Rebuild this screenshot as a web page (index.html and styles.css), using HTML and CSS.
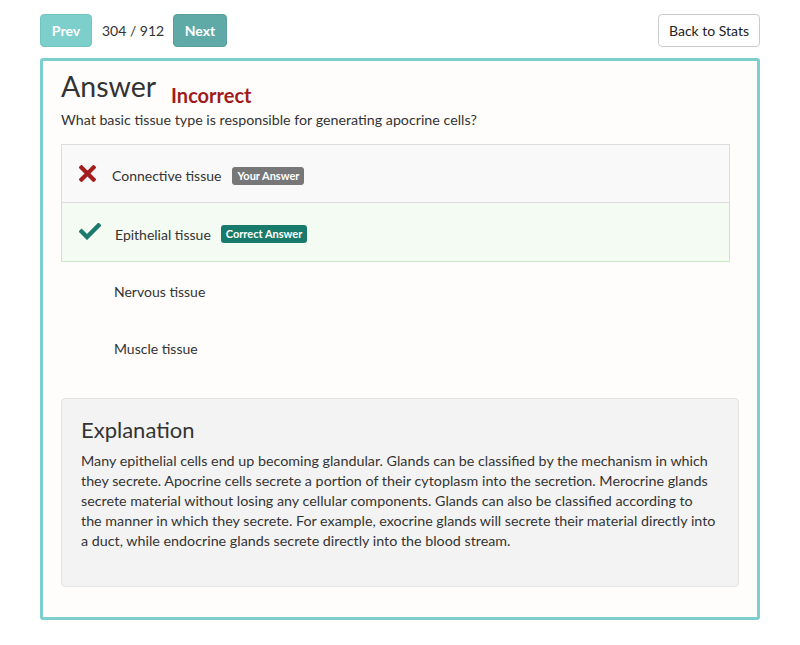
FILE: index.html
```html
<!DOCTYPE html>
<html>
<head>
<meta charset="utf-8">
<link rel="stylesheet" href="styles.css">
</head>
<body>
<div class="page">
  <div class="toolbar">
    <div class="nav">
      <button class="btn btn-prev">Prev</button>
      <span class="counter">304 / 912</span>
      <button class="btn btn-next">Next</button>
    </div>
    <button class="btn btn-back">Back to Stats</button>
  </div>
  <div class="card">
    <div class="title-row">
      <h1 class="title">Answer</h1>
      <span class="status">Incorrect</span>
    </div>
    <p class="question">What basic tissue type is responsible for generating apocrine cells?</p>
    <ul class="options">
      <li class="option option-wrong">
        <span class="icon"><svg width="17" height="17" viewBox="0 0 17 17"><path d="M2.5 2.5 L14.5 14.5 M14.5 2.5 L2.5 14.5" stroke="#a41e1e" stroke-width="4.2" stroke-linecap="square"/></svg></span>
        <span class="label">Connective tissue</span>
        <span class="badge badge-your">Your Answer</span>
      </li>
      <li class="option option-correct">
        <span class="icon"><svg width="22" height="17" viewBox="0 0 22 17"><path d="M2.5 8.5 L8 14 L19.5 2.5" fill="none" stroke="#1b7a6b" stroke-width="4.4" stroke-linecap="square"/></svg></span>
        <span class="label label-shift">Epithelial tissue</span>
        <span class="badge badge-correct">Correct Answer</span>
      </li>
      <li class="option">
        <span class="icon"></span>
        <span class="label label-mid">Nervous tissue</span>
      </li>
      <li class="option">
        <span class="icon"></span>
        <span class="label label-mid">Muscle tissue</span>
      </li>
    </ul>
    <div class="explanation">
      <h2 class="exp-title">Explanation</h2>
      <p class="exp-text">Many epithelial cells end up becoming glandular. Glands can be classified by the mechanism in which they secrete. Apocrine cells secrete a portion of their cytoplasm into the secretion. Merocrine glands secrete material without losing any cellular components. Glands can also be classified according to<br>the manner in which they secrete. For example, exocrine glands will secrete their material directly into a duct, while endocrine glands secrete directly into the blood stream.</p>
    </div>
  </div>
</div>
</body>
</html>
```

FILE: styles.css
```css
* { box-sizing: border-box; }
html, body { margin: 0; padding: 0; background: #ffffff; }
body {
  font-family: Lato, "Open Sans", sans-serif;
  color: #333333;
  font-size: 14px;
}
.page {
  padding: 14px 40px 0 40px;
}
.toolbar {
  display: flex;
  justify-content: space-between;
  align-items: center;
  height: 33px;
  margin-bottom: 11px;
}
.nav {
  display: flex;
  align-items: center;
}
.btn {
  font-family: Lato, sans-serif;
  height: 33px;
  border-radius: 4px;
  font-size: 14px;
  padding: 0 12px;
  cursor: pointer;
  line-height: 31px;
}
.btn-prev {
  width: 52px;
  padding: 0;
  background: #7dcfcc;
  border: 1px solid #72c4c1;
  color: #ffffff;
  font-weight: 700;
}
.btn-next {
  width: 54px;
  padding: 0;
  background: #5faaa6;
  border: 1px solid #589f9b;
  color: #ffffff;
  font-weight: 700;
}
.counter {
  font-size: 14px;
  color: #333;
  margin: 0 10px;
  white-space: nowrap;
  width: 61px;
  text-align: center;
}
.btn-back {
  width: 102px;
  padding: 0;
  background: #ffffff;
  border: 1px solid #cccccc;
  color: #222;
  font-size: 14px;
}
.card {
  border: 3px solid #7ccfcc;
  border-radius: 3px;
  background: #fefdfb;
  padding: 6px 18px 32px 18px;
  height: 562px;
}
.title-row {
  display: flex;
  align-items: baseline;
  height: 38px;
}
.title {
  font-size: 28.5px;
  font-weight: 400;
  margin: 0;
  color: #333;
  line-height: 38px;
}
.status {
  color: #a01b1b;
  font-weight: 700;
  font-size: 20px;
  margin-left: 15px;
  position: relative;
  top: 6px;
}
.question {
  margin: 5px 0 14px 0;
  font-size: 14.25px;
  line-height: 20px;
  color: #333;
}
.options {
  list-style: none;
  margin: 0 9px 0 0;
  padding: 0;
}
.option {
  display: flex;
  align-items: center;
  height: 57px;
  border: 1px solid transparent;
  padding-left: 17px;
  padding-top: 2px;
  font-size: 14px;
  color: #333;
}
.option-wrong {
  background: #f9f9f9;
  border-color: #dddddd;
  height: 59px;
  padding-top: 4px;
}
.option-correct {
  background: #f4fbf2;
  border-color: #cae6c2;
  border-top: 0;
  height: 59px;
  padding-top: 4px;
}
.option-wrong .icon { margin-top: -4px; }
.option-correct .icon { margin-top: -6px; }
.icon {
  width: 33px;
  display: inline-flex;
  align-items: center;
}
.label-shift { margin-left: 3px; }
.label-mid { margin-left: 2px; }
.badge {
  display: inline-block;
  margin-left: 11px;
  font-size: 11px;
  font-weight: 700;
  color: #fff;
  padding: 0 5px;
  height: 18px;
  line-height: 18px;
  border-radius: 3px;
}
.badge-your { background: #777777; }
.badge-correct { background: #177a6a; margin-left: 10px; }
.explanation {
  margin-top: 22px;
  background: #f3f3f3;
  border: 1px solid #e3e3e3;
  border-radius: 4px;
  padding: 18px 17px 20px 19px;
  height: 189px;
}
.exp-title {
  font-size: 22px;
  font-weight: 400;
  margin: 0 0 8px 0;
  line-height: 26px;
  color: #333;
}
.exp-text {
  margin: 0;
  font-size: 14.3px;
  line-height: 20px;
  color: #333;
}
```
